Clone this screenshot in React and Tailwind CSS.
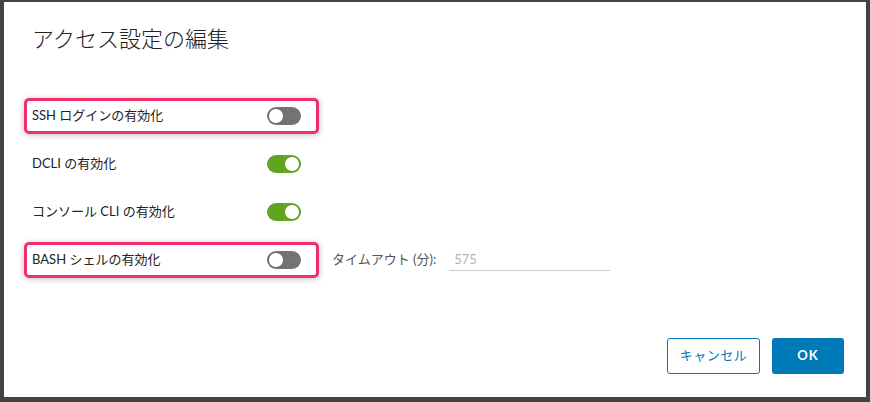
import React, { useState } from "react";

const FONT = "font-['Lato','Noto_Sans_CJK_JP',sans-serif]";

// Clarity風トグル
function Toggle({ on, onChange }) {
  return (
    <button
      type="button"
      onClick={onChange}
      className={`relative w-[34px] h-[18px] rounded-full shrink-0 ${on ? "bg-[#62a420]" : "bg-[#737373]"}`}
    >
      <span
        className={`absolute top-[2px] w-[14px] h-[14px] rounded-full bg-white ${on ? "left-[18px]" : "left-[2px]"}`}
      />
    </button>
  );
}

function Row({ label, on, onChange, highlight, children }) {
  return (
    <div className="flex items-center">
      <div
        className={`flex items-center justify-between w-[295px] h-[36px] pl-[5px] pr-[15px] rounded-[5px] border-[3px] ${
          highlight ? "border-[#f0306c] shadow-[0_1px_6px_rgba(0,0,0,0.25)]" : "border-transparent"
        }`}
      >
        <span className="text-[13px] text-[#222]">{label}</span>
        <Toggle on={on} onChange={onChange} />
      </div>
      {children}
    </div>
  );
}

export default function App() {
  const [ssh, setSsh] = useState(false);
  const [dcli, setDcli] = useState(true);
  const [console_, setConsole] = useState(true);
  const [bash, setBash] = useState(false);

  return (
    <div className={`w-[870px] h-[402px] bg-[#434343] pt-[2px] pl-[4px] pr-[4px] pb-[5px] ${FONT}`}>
      <div className="w-full h-full bg-white flex flex-col px-[20px]">
        {/* タイトル */}
        <h1 className="mt-[23px] ml-[8px] text-[22px] leading-[28px] font-light text-[#222]">アクセス設定の編集</h1>

        {/* 設定行 */}
        <div className="mt-[45px] flex flex-col gap-[12px]">
          <Row label="SSH ログインの有効化" on={ssh} onChange={() => setSsh(!ssh)} highlight />
          <Row label="DCLI の有効化" on={dcli} onChange={() => setDcli(!dcli)} />
          <Row label="コンソール CLI の有効化" on={console_} onChange={() => setConsole(!console_)} />
          <Row label="BASH シェルの有効化" on={bash} onChange={() => setBash(!bash)} highlight>
            <span className="ml-[13px] text-[13px] text-[#565656]">タイムアウト (分):</span>
            <div className="ml-[13px] w-[161px] h-[22px] border-b border-[#cccccc] flex items-center pl-[5px]">
              <span className="text-[13px] text-[#b3b3b3]">575</span>
            </div>
          </Row>
        </div>

        {/* ボタン */}
        <div className="mt-auto mb-[23px] flex justify-end gap-[12px] pr-[2px]">
          <button className="w-[93px] h-[36px] rounded-[3px] border border-[#0079b8] text-[#0079b8] text-[13px] tracking-[0.5px]">
            キャンセル
          </button>
          <button className="w-[72px] h-[36px] rounded-[3px] bg-[#0079b8] text-white text-[13px] font-bold tracking-[1px]">
            OK
          </button>
        </div>
      </div>
    </div>
  );
}
